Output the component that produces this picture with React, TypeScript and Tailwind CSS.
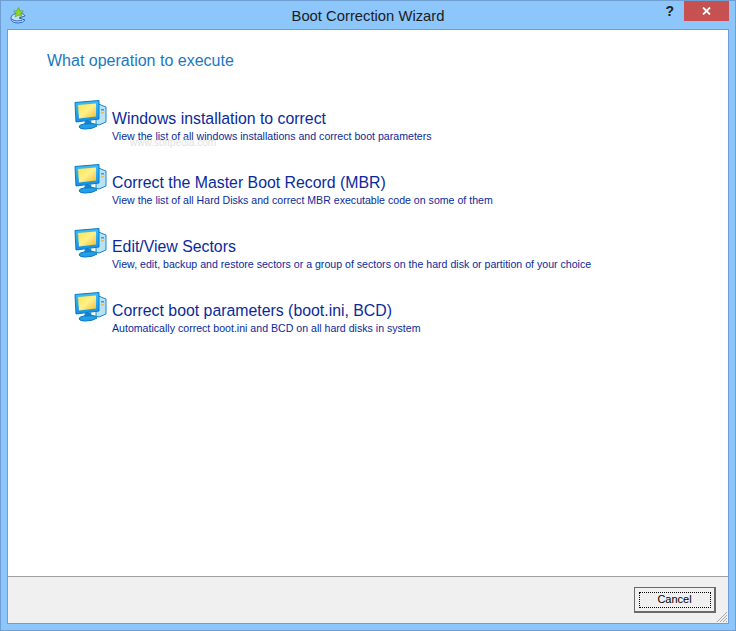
const font = { fontFamily: '"Liberation Sans", Arial, sans-serif' };

function Monitor() {
  return (
    <svg width="33" height="30" viewBox="0 0 33 30" className="shrink-0">
      <defs>
        <linearGradient id="scr" x1="0" y1="0" x2="1" y2="1">
          <stop offset="0" stopColor="#ffe23c" />
          <stop offset="0.5" stopColor="#fff08c" />
          <stop offset="1" stopColor="#f4bd2e" />
        </linearGradient>
        <linearGradient id="frm" x1="0" y1="0" x2="0" y2="1">
          <stop offset="0" stopColor="#3cc0f6" />
          <stop offset="1" stopColor="#1190e0" />
        </linearGradient>
      </defs>
      <path d="M22 3 L32 7 L32 22 L25 25 L22 24 Z" fill="#b7e2f8" stroke="#1c86cc" strokeWidth="1" />
      <rect x="27" y="9" width="3" height="1.5" fill="#2f9ee0" />
      <rect x="27" y="12" width="3" height="1.5" fill="#f0c030" />
      <path d="M1 2.5 L25 0.5 L25 19 L2 22 Z" fill="url(#frm)" stroke="#0b78c6" strokeWidth="1" />
      <path d="M4 5 L22 3.5 L22 16.5 L5 18.5 Z" fill="url(#scr)" />
      <path d="M11 21 L17 20.5 L18 24 L10 24.5 Z" fill="#1684d2" />
      <path d="M5 27 Q5 24.5 10 24 L19 23.5 Q23 24 23 26 Q19 29 11 29 Q6 29 5 27 Z" fill="#20a0e6" stroke="#0b78c6" strokeWidth="1" />
    </svg>
  );
}

function AppIcon() {
  return (
    <svg width="18" height="18" viewBox="0 0 18 18">
      <path d="M2 11 Q2 7 9 6 Q15 6 16 9 L10 11 L16 13 Q14 16 9 16 Q2 16 2 11 Z" fill="#bfe0f8" stroke="#2f69c0" strokeWidth="1" />
      <path d="M3 12.5 Q6 15 13 13.5" fill="none" stroke="#2f69c0" strokeWidth="1" />
      <path d="M9.5 0.5 L11 3.8 L14.5 4 L12 6.5 L13 10 L9.5 8.3 L6 10 L7 6.5 L4.5 4 L8 3.8 Z" fill="#8ed42a" stroke="#5c9e1a" strokeWidth="0.6" />
    </svg>
  );
}

const items = [
  ["Windows installation to correct", "View the list of all windows installations and correct boot parameters"],
  ["Correct the Master Boot Record (MBR)", "View the list of all Hard Disks and correct MBR executable code on some of them"],
  ["Edit/View Sectors", "View, edit, backup and restore sectors or a group of sectors on the hard disk or partition of your choice"],
  ["Correct boot parameters (boot.ini, BCD)", "Automatically correct boot.ini and BCD on all hard disks in system"],
];

export default function App() {
  return (
    <div style={font} className="w-[736px] h-[631px] bg-[#8cc6fb] border border-[#6e9fd0] flex flex-col overflow-hidden">
      <div className="h-[28px] shrink-0 flex items-start relative">
        <div className="ml-[8px] mt-[6px]"><AppIcon /></div>
        <div className="absolute left-0 right-0 top-0 text-center text-[14.8px] leading-[30px] text-[#1c1c1c]">Boot Correction Wizard</div>
        <div className="flex-1" />
        <div className="text-[14px] font-bold text-[#222] mr-[10px] mt-[1px] leading-[18px]">?</div>
        <div className="w-[45px] h-[20px] mr-[6px] bg-[#c75050] text-white flex items-center justify-center">
          <svg width="9" height="8" viewBox="0 0 9 8"><path d="M1 0.5 L8 7.5 M8 0.5 L1 7.5" stroke="#fff" strokeWidth="1.8" /></svg>
        </div>
      </div>
      <div className="mx-[6px] mb-[6px] flex-1 bg-white border border-[#6e9fd0] flex flex-col min-h-0">
        <div className="flex-1 pl-[39px] pt-[22px] relative">
          <div className="text-[16px] leading-[18px] text-[#1a78c2]">What operation to execute</div>
          <div className="mt-[30px] ml-[27px] flex flex-col gap-[34px]">
            {items.map(([t, d]) => (
              <div key={t} className="flex h-[30px]">
                <Monitor />
                <div className="ml-[5px] pt-[10px]">
                  <div className="text-[15.85px] leading-[18px] text-[#0a2a9c] whitespace-nowrap">{t}</div>
                  <div className="text-[10.6px] leading-[13px] mt-[2px] text-[#0a2a9c] whitespace-nowrap">{d}</div>
                </div>
              </div>
            ))}
          </div>
          <div className="absolute left-[122px] top-[107px] text-[10px] leading-[11px] text-[#e2e2e2]">www.softpedia.com</div>
        </div>
        <div className="h-[47px] shrink-0 border-t border-[#a0a0a0] bg-[#f0f0f0] flex items-start justify-end relative">
          <div className="mt-[10px] mr-[12px] w-[82px] h-[26px] bg-[#f0f0f0] border border-[#6a6a6a] border-b-2 border-r-2 flex items-center justify-center">
            <div className="w-[72px] h-[16px] border border-dotted border-black flex items-center justify-center text-[11px] text-black">Cancel</div>
          </div>
          <svg width="12" height="12" viewBox="0 0 12 12" className="absolute right-0 bottom-0">
            <path d="M11 1 L1 11 M11 4 L4 11 M11 7 L7 11 M11 10 L10 11" stroke="#a8a8a8" strokeWidth="1" />
          </svg>
        </div>
      </div>
    </div>
  );
}
